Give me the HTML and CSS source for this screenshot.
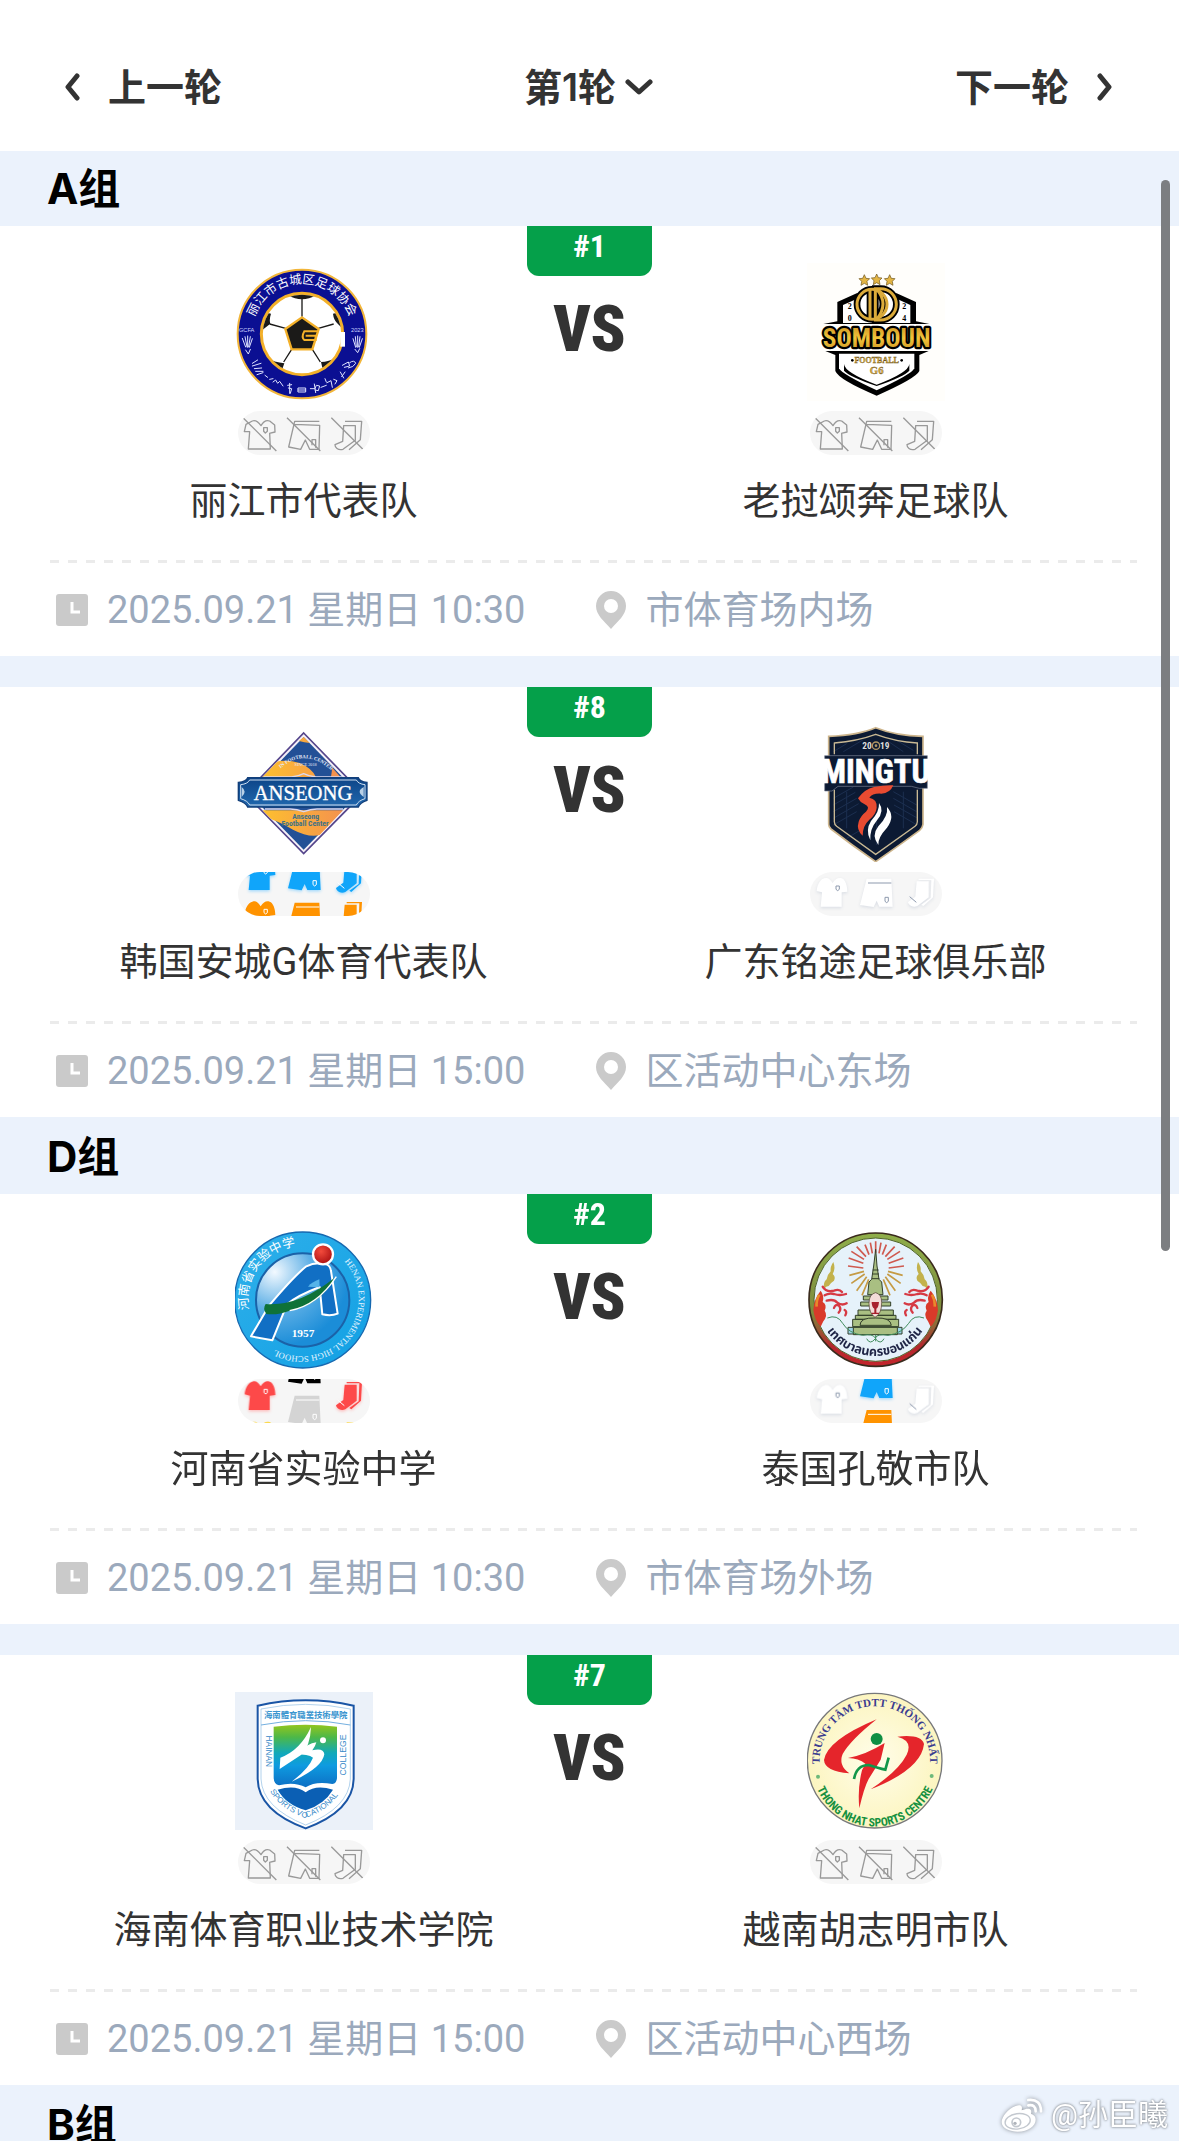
FILE: index.html
```html
<!DOCTYPE html>
<html lang="zh-CN">
<head>
  <meta charset="UTF-8" />
  <meta name="viewport" content="width=device-width, initial-scale=1.0"/>
  <title>赛程 | 第1轮</title>
  <link rel="stylesheet" href="styles.css">
</head>
<body>
  <!-- Shared icons -->
  <svg class="sprite" aria-hidden="true">
    <symbol id="chevron" viewBox="0 0 16 28">
      <path d="M13 3 4 14l9 11" fill="none" stroke="currentColor" stroke-width="5" stroke-linecap="round" stroke-linejoin="round"/>
    </symbol>
    <symbol id="clock" viewBox="0 0 32 32">
      <rect width="32" height="32" rx="3" fill="#cacaca"/>
      <path d="M16 8v10h8" fill="none" stroke="#fff" stroke-width="3"/>
    </symbol>
    <symbol id="pin" viewBox="0 0 32 38">
      <path d="M16 0a15 15 0 0 1 15 15c0 9-8 15-15 23C9 30 1 24 1 15A15 15 0 0 1 16 0z" fill="#cacaca"/>
      <circle cx="16" cy="15" r="7" fill="#fff"/>
    </symbol>

    <!-- No kit chosen -->
    <symbol id="no-kit" viewBox="0 0 396 132">
      <g fill="none" stroke="#999" stroke-width="4" stroke-linejoin="round">
        <path d="M43 30 24 40l-5 22h16l-4 52h66l-2-48M43 30c8-3 16 0 26 14 8-14 18-17 26-14l15 12 1 21-17 4M77 50h11v11l-6 5-5-5z"/>
        <path d="M15 20l100 100"/>
        <path d="M244 31h-74l-18 77 36 7 14-28 13 28h28l2-72-76-3M222 103V86h11v24"/>
        <path d="M147 20l100 100"/>
        <path d="M317 44h35v44l-37 27c-16 4-24-6-24-14l23-10zM321 31h50l-4 55-34 30"/>
        <path d="M280 20l94 94"/>
      </g>
    </symbol>

    <symbol id="shirt" viewBox="0 0 132 132">
      <path d="M43 19c10-3 16 0 25 14 9-14 17-17 27-14 10 3 17 20 17 40l-17 2v43H32l4-43-16-4c2-22 12-35 23-38z" fill="currentColor"/>
      <path d="M78 42h10v10l-5 4-5-4z" fill="none" stroke="var(--mark)" stroke-width="3"/>
    </symbol>
    <symbol id="shorts" viewBox="0 0 132 132">
      <path d="M38 20h74l4 84H76L68 86l-9 19-41-6z" fill="currentColor"/>
      <path d="M42 33h70M93 76h10v12l-5 4-5-4z" fill="none" stroke="var(--mark)" stroke-width="3"/>
    </symbol>
    <symbol id="socks" viewBox="0 0 132 132">
      <path d="M56 28h36v48l-34 26c-14 6-26-2-28-12l22-16z" fill="currentColor"/>
      <path d="M62 20h46l-3 56-29 26-6-4 28-20 2-54H62z" fill="currentColor"/>
      <path d="M35 74l20 17" fill="none" stroke="var(--mark)" stroke-width="3"/>
    </symbol>
  </svg>

  <header class="toolbar">
    <button class="round-btn" type="button">
      <svg class="chevron"><use href="#chevron"/></svg>
      上一轮
    </button>
    <label class="round-pick">
      <select aria-label="选择轮次">
        <option>第1轮</option>
      </select>
      <svg class="chevron-down" viewBox="0 0 28 16"><path d="M3 3l11 10L25 3" fill="none" stroke="currentColor" stroke-width="5" stroke-linecap="round" stroke-linejoin="round"/></svg>
    </label>
    <button class="round-btn" type="button">
      下一轮
      <svg class="chevron flip"><use href="#chevron"/></svg>
    </button>
  </header>

  <main class="schedule">
    <h2 class="group-title">A组</h2>

    <article class="match">
      <div class="versus">
        <div class="team">
          <svg class="crest" viewBox="46 39 414 414" role="img" aria-label="丽江市古城区足球协会">
            <defs>
              <path id="ljTop" d="M96 252a151 151 0 0 1 302 0"/>
              <clipPath id="ljBall"><circle cx="247" cy="252" r="118"/></clipPath>
            </defs>
            <circle cx="247" cy="252" r="193" fill="#0b0f92" stroke="#f2b63a" stroke-width="6"/>
            <circle cx="247" cy="252" r="122" fill="#fff" stroke="#f3b029" stroke-width="9"/>
            <g clip-path="url(#ljBall)">
              <path d="M205 136q42 24 84 0l-10-10h-64zM128 185l26 6q-6 18-2 30l-25 20zM366 185l-26 6q2 18 12 28l15 15zM140 322q24 16 54 18l-10 28-20-6zM354 322q-28 14-50 14l8 34 28-14z" fill="#1b1a18"/>
              <path d="M247 200v-55M198 235l-48-13M296 235l46-13M216 298l-24 38M278 298l24 38" stroke="#1b1a18" stroke-width="4"/>
            </g>
            <path d="M247 202l50 35-19 61h-62l-19-61z" fill="#1b1a18" stroke="#f3b029" stroke-width="7"/>
            <path d="M296 244h-42q-10 18 0 26h34v-13h-30" fill="none" stroke="#f3b029" stroke-width="6"/>
            <path d="M362 246h14v44h-14z" fill="#fff"/>
            <text class="cjk" font-size="37" fill="#fff" text-anchor="middle"><textPath href="#ljTop" startOffset="50%">丽江市古城区足球协会</textPath></text>
            <g font-family="Liberation Sans" font-size="17" fill="#cdd4ff" text-anchor="middle">
              <text x="81" y="247">GCFA</text>
              <text x="413" y="247">2023</text>
            </g>
            <g fill="none" stroke="#dfe3ff" stroke-width="3" stroke-linecap="round">
              <path d="M68 265l10 26M76 260l6 30M84 258v34M92 260l-5 30M98 266l-9 26M78 300l8 12 6-14M400 266l8 26M407 260l3 30M414 258v34M421 260l-4 30M428 266l-9 26M406 298l8 10 6-12"/>
              <path d="M98 340l16-10M98 348l26-8M104 356l22-2M108 364l22 0M112 374l18-6M136 376l8 6M150 388l10-2M160 396l8-6 6 10 6-6 10 14M204 406l12-2M206 414l10 2-4 14M210 400v30M236 414h22v12h-22zM236 420h22M272 416h14l4-10 10 2-4 14-10-2M284 402l4 26M304 412l16-6M316 386l4 10M322 398l12-6 4 20M342 388l10 4-6 10M362 366l10 18M366 380l10-14M368 346l18-10 4 12-16 4M390 338q14-10 18 2-6 12-22 14"/>
            </g>
          </svg>
          <svg class="kit" viewBox="0 0 396 132" role="img" aria-label="球衣未定"><use href="#no-kit"/></svg>
          <p class="name">丽江市代表队</p>
        </div>
        <div class="middle">
          <span class="no">#1</span>
          <strong class="vs">VS</strong>
        </div>
        <div class="team">
          <svg class="crest" viewBox="51 39 414 414" role="img" aria-label="SOMBOUN FOOTBALL G6">
            <defs>
              <linearGradient id="gold" x1="0" y1="0" x2="0" y2="1">
                <stop offset="0" stop-color="#c98f1f"/>
                <stop offset=".5" stop-color="#f2c53c"/>
                <stop offset="1" stop-color="#c98f1f"/>
              </linearGradient>
              <path id="star" d="M0-16l5 11 11 1-8 8 2 12-10-6-10 6 2-12-8-8 11-1z"/>
              <g id="sbRings">
                <circle cx="246" cy="163" r="45"/>
                <path d="M240 118v90M256 116h16a47 47 0 0 1 0 94h-16zM262 120q34 40 0 86"/>
              </g>
            </defs>
            <rect x="51" y="39" width="414" height="414" fill="#fffefb"/>
            <g fill="#e3b544" stroke="#6b5118" stroke-width="2">
              <use href="#star" x="223" y="90"/><use href="#star" x="260" y="88"/><use href="#star" x="299" y="90"/>
            </g>
            <path d="M142 156l58-26h120l58 26v58l40 8H100l42-8z"/>
            <path d="M159 165l46-20h112l44 20v54H159z" fill="#fff"/>
            <path d="M106 303h310l-28 12v48q-10 22-128 74-114-48-124-74v-48z"/>
            <path d="M147 311h226v44q-8 18-113 66-104-48-113-66z" fill="#fff"/>
            <path d="M162 342q2 26 98 62 96-36 98-62v20q-16 18-98 46-82-28-98-46z"/>
            <use href="#sbRings" fill="#fff" stroke="#000" stroke-width="20"/>
            <use href="#sbRings" fill="none" stroke="#dcab3a" stroke-width="9"/>
            <g font-family="Liberation Serif" font-size="24" font-weight="bold" text-anchor="middle">
              <text x="179" y="177">2</text><text x="179" y="214">0</text>
              <text x="343" y="177">2</text><text x="343" y="214">4</text>
            </g>
            <text x="260" y="290" class="condensed" font-size="76" text-anchor="middle" fill="url(#gold)" stroke="#000" stroke-width="13" stroke-linejoin="round" paint-order="stroke">SOMBOUN</text>
            <g font-family="Liberation Serif" font-weight="bold" text-anchor="middle" fill="#dcae3d" stroke="#6b5118">
              <text x="260" y="339" font-size="24">FOOTBALL</text>
              <text x="260" y="371" font-size="32">G6</text>
            </g>
            <circle cx="187" cy="331" r="4"/><circle cx="335" cy="331" r="4"/>
          </svg>
          <svg class="kit" viewBox="0 0 396 132" role="img" aria-label="球衣未定"><use href="#no-kit"/></svg>
          <p class="name">老挝颂奔足球队</p>
        </div>
      </div>
      <div class="info">
        <svg class="clock"><use href="#clock"/></svg>
        <time datetime="2025-09-21T10:30">2025.09.21 星期日 10:30</time>
        <svg class="pin"><use href="#pin"/></svg>
        <span>市体育场内场</span>
      </div>
    </article>

    <article class="match">
      <div class="versus">
        <div class="team">
          <svg class="crest" viewBox="46 27 414 414" role="img" aria-label="ANSEONG">
            <defs>
              <linearGradient id="asBar" x1="0" y1="0" x2="0" y2="1">
                <stop offset="0" stop-color="#0d4487"/><stop offset="1" stop-color="#2168ae"/>
              </linearGradient>
              <linearGradient id="asSun" x1="0" x2="1">
                <stop offset="0" stop-color="#fdc02f"/><stop offset="1" stop-color="#f4924e"/>
              </linearGradient>
              <clipPath id="asDiamond"><path d="M252 58l172 178-172 176L80 236z"/></clipPath>
              <path id="asArc" d="M168 174q86-92 182 6"/>
            </defs>
            <path d="M252 54l177 182-177 180L76 236z" fill="#f5f0f8" stroke="#54458b" stroke-width="5"/>
            <path d="M252 66l165 170-165 168L88 236z" fill="#235096"/>
            <g clip-path="url(#asDiamond)">
              <path d="M238 78q16 4 32 6l-18-18zM124 190l34-46q36-14 82 0 38 16 50 44zM130 286h240l-70 74q-34 8-80-16-50-30-90-38z" fill="url(#asSun)"/>
              <path d="M338 158l24 28h-28z" fill="#f4924e"/>
            </g>
            <path d="M132 186h84q20-2 36-10 16 8 36 10h84" fill="none" stroke="#dcd8ee" stroke-width="4"/>
            <text font-family="Liberation Serif" font-size="15" font-weight="bold" fill="#e4e9f7" text-anchor="middle"><textPath href="#asArc" startOffset="50%">IN FOOTBALL CENTER</textPath></text>
            <text x="258" y="152" font-family="Liberation Serif" font-size="13" fill="#e4e9f7" text-anchor="middle">SINCE 2018</text>
            <path d="M84 188h332q4 12 26 14v54q-22 8-26 20H84q-4-12-28-20v-54q24-2 28-14z" fill="url(#asBar)" stroke="#123f7a" stroke-width="4"/>
            <path d="M90 195h320q6 12 26 14v42q-20 6-26 19H90q-6-13-27-19v-42q21-2 27-14z" fill="none" stroke="#d2e0f0" stroke-width="3"/>
            <path d="M66 216q18 14 0 30zM432 216q-24 14 0 30z" fill="#b9d0e6"/>
            <text x="250" y="254" font-family="Liberation Serif" font-size="62" fill="#fff" stroke="#fff" text-anchor="middle">ANSEONG</text>
            <path d="M136 282h76q20 0 40 8 20-8 40-8h78" fill="none" stroke="#dcd8ee" stroke-width="4"/>
            <g class="condensed" font-size="23" fill="#3d7187" text-anchor="middle">
              <text x="258" y="311">Anseong</text>
              <text x="256" y="334">Football Center</text>
            </g>
          </svg>
          <svg class="kit" viewBox="0 0 396 132" role="img" aria-label="蓝色或橙色球衣">
            <g class="blue">
              <use href="#shirt" x="0" y="-50" width="132" height="132"/>
              <use href="#shorts" x="132" y="-50" width="132" height="132"/>
              <use href="#socks" x="264" y="-42" width="132" height="132"/>
            </g>
            <g class="orange">
              <use href="#shirt" x="0" y="70" width="132" height="132"/>
              <use href="#shorts" x="132" y="72" width="132" height="132"/>
              <use href="#socks" x="264" y="70" width="132" height="132"/>
            </g>
          </svg>
          <p class="name">韩国安城G体育代表队</p>
        </div>
        <div class="middle">
          <span class="no">#8</span>
          <strong class="vs">VS</strong>
        </div>
        <div class="team">
          <svg class="crest" viewBox="51 27 414 414" role="img" aria-label="MINGTU">
            <path d="M116 64q90-4 141-26 60 24 142 26v264q-2 12-10 18-60 44-132 94-72-50-134-98-7-6-7-14z" fill="#0c1a33" stroke="#cdb58c" stroke-width="5"/>
            <g fill="none" stroke="#1c2f50" stroke-width="3">
              <path d="M130 110l40-24M160 110l60-36M290 76l50 34M320 76l50 30M130 250l60-34M130 270l66-38M130 290l70-40M130 310l76-44M130 330l70-40M310 230l70 40M310 250l70 40M312 270l68 38M312 290l66 38M260 300v90M220 340l-50 30M170 230v110M340 230v110"/>
            </g>
            <path d="M133 118V84q70-6 124-26 60 22 125 26v34M133 224v96q0 8 7 14l117 84 118-84q7-6 7-14v-96" fill="none" stroke="#c9b994" stroke-width="4"/>
            <path d="M104 122h308v98h-24l-24-6H144l-18 14h-22z" fill="#0c1a33" stroke="#7c8496" stroke-width="2"/>
            <g class="condensed" font-size="28" fill="#ddd" text-anchor="middle">
              <text x="231" y="102">20</text><text x="284" y="102">19</text>
            </g>
            <circle cx="258" cy="92" r="11" fill="none" stroke="#b09564" stroke-width="4"/><circle cx="258" cy="92" r="4" fill="#b09564"/>
            <text x="257" y="205" class="condensed" font-size="98" fill="#fff" stroke="#fff" stroke-width="2" text-anchor="middle">MINGTU</text>
            <path d="M310 211q-10 24-36 25-26-2-36 12 24 4 22 30-2 20-22 36-20 18-20 48-20-18-12-42 6-18 22-30 14-14-4-22-14-6-20-18 20-28 48-34 30-6 58-5z" fill="#e94b31"/>
            <path d="M267 264q18 24-6 52-22 26-20 60-16-30 2-58 26-28 24-54zM291 276q26 28 0 62-28 30-26 52-22-28 0-56 30-30 26-58z" fill="#fff"/>
          </svg>
          <svg class="kit" viewBox="0 0 396 132" role="img" aria-label="白色球衣">
            <g class="white">
              <use href="#shirt" width="132" height="132"/>
              <use href="#shorts" x="132" width="132" height="132"/>
              <use href="#socks" x="264" width="132" height="132"/>
            </g>
          </svg>
          <p class="name">广东铭途足球俱乐部</p>
        </div>
      </div>
      <div class="info">
        <svg class="clock"><use href="#clock"/></svg>
        <time datetime="2025-09-21T15:00">2025.09.21 星期日 15:00</time>
        <svg class="pin"><use href="#pin"/></svg>
        <span>区活动中心东场</span>
      </div>
    </article>

    <h2 class="group-title">D组</h2>

    <article class="match">
      <div class="versus">
        <div class="team">
          <svg class="crest" viewBox="46 39 414 414" role="img" aria-label="河南省实验中学">
            <defs>
              <radialGradient id="hnInner" cx=".2" cy=".2" r=".8">
                <stop offset="0" stop-color="#f2f9ff"/><stop offset=".5" stop-color="#5fb0e6"/><stop offset="1" stop-color="#1b8dd8"/>
              </radialGradient>
              <linearGradient id="hnRing" x1="0" y1="0" x2="1" y2="1">
                <stop offset="0" stop-color="#2fb0ea"/><stop offset="1" stop-color="#12a0e4"/>
              </linearGradient>
              <radialGradient id="hnRed" cx=".4" cy=".35" r=".7">
                <stop offset="0" stop-color="#f34b3c"/><stop offset="1" stop-color="#a80d10"/>
              </radialGradient>
              <path id="hnLeft" d="M97 306A160 160 0 0 1 288 90"/>
              <path id="hnRight" d="M352 109A171 171 0 1 1 140 378"/>
            </defs>
            <circle cx="249" cy="246" r="204" fill="url(#hnRing)" stroke="#1568b0" stroke-width="4"/>
            <circle cx="249" cy="246" r="140" fill="url(#hnInner)" stroke="#1b62a8" stroke-width="6"/>
            <text class="cjk" font-size="38" fill="#fff" text-anchor="middle"><textPath href="#hnLeft" startOffset="46%">河南省实验中学</textPath></text>
            <text font-family="Liberation Serif" font-size="26" fill="#eaf6ff" text-anchor="middle"><textPath href="#hnRight" startOffset="50%">HENAN EXPERIMENTAL HIGH SCHOOL</textPath></text>
            <g stroke="#fff" stroke-width="6" stroke-linejoin="round">
              <path d="M94 355l54-92q76-90 112-118 28-14 60-6 12 4 14 20l20 128q-20 8-46 2l-8-82q-68 26-98 52l-44 108z" fill="#116fc4"/>
            </g>
            <path d="M300 208l-1-24q-22 8-34 22z" fill="#55b3e8"/>
            <path d="M138 258q98 8 206-78-40 80-134 98-36 14-70 10-12-16-2-30z" fill="#0f7238"/>
            <path d="M210 278q82-14 140-102" fill="none" stroke="#fff" stroke-width="4"/>
            <circle cx="310" cy="109" r="30" fill="url(#hnRed)" stroke="#fff" stroke-width="7"/>
            <text x="250" y="358" font-family="Liberation Serif" font-weight="bold" font-size="34" fill="#fff" text-anchor="middle">1957</text>
          </svg>
          <svg class="kit" viewBox="0 0 396 132" role="img" aria-label="红色或黄色球衣">
            <g class="red">
              <use href="#shirt" y="-11" width="132" height="132"/>
              <use href="#socks" x="264" y="-11" width="132" height="132"/>
            </g>
            <use class="black" href="#shorts" x="132" y="-91" width="132" height="132"/>
            <use class="grey" href="#shorts" x="132" y="30" width="132" height="132"/>
            <g class="yellow">
              <use href="#shirt" y="110" width="132" height="132"/>
              <use href="#socks" x="264" y="110" width="132" height="132"/>
            </g>
          </svg>
          <p class="name">河南省实验中学</p>
        </div>
        <div class="middle">
          <span class="no">#2</span>
          <strong class="vs">VS</strong>
        </div>
        <div class="team">
          <svg class="crest" viewBox="51 39 414 414" role="img" aria-label="เทศบาลนครขอนแก่น">
            <defs>
              <linearGradient id="kkRing" x1="0" y1="0" x2="0" y2="1">
                <stop offset="0" stop-color="#8fae4a"/><stop offset=".6" stop-color="#7d8b3c"/><stop offset=".85" stop-color="#b3282d"/><stop offset="1" stop-color="#c4252c"/>
              </linearGradient>
              <path id="kkArc" d="M95 312A176 176 0 0 0 414 312"/>
              <g id="flame">
                <path d="M130 132q8 20-2 36 10 8 4 20-10 6-16 16-8 0-14 10-4-20 8-30 2-14 12-24-2-14 8-28z" fill="#c3b24c"/>
                <g fill="none" stroke="#d63a44" stroke-width="7" stroke-linecap="round">
                  <path d="M98 206q10 18 34 12 16-6 24 4M104 232q12-8 28-4 18 6 36 0M110 248q22-6 32 6 14 10 28 2M132 270q4-12 14-8 10 12 0 22M164 276q8 4 2 16"/>
                </g>
                <path d="M92 218q12 16 6 34 14 8 6 26 10 14-4 32l-8 16q-18-18-22-50 2-34 22-58z" fill="#d93a2a"/>
                <path d="M88 230q-10 18-8 36" fill="none" stroke="#e98a2c" stroke-width="8"/>
              </g>
            </defs>
            <circle cx="257" cy="245" r="200" fill="url(#kkRing)" stroke="#3a2a1c" stroke-width="5"/>
            <circle cx="257" cy="245" r="185" fill="#e6f2fa" stroke="#50652a" stroke-width="3"/>
            <g stroke="#cf5a50" stroke-width="5">
              <path d="M237 110l-12-30M247 106l-6-32M257 104V70M267 106l6-32M277 110l12-30M228 116l-28-30M286 116l28-30M222 124l-38-24M292 124l38-24M220 136l-44-16M296 136l44-16M220 150l-46-6M296 150l46-6"/>
            </g>
            <g stroke="#c59b45" stroke-width="5">
              <path d="M222 160l-44 12M294 160l44 12M224 168l-40 28M292 168l40 28M230 176l-30 42M286 176l30 42M236 184l-20 48M280 184l20 48"/>
            </g>
            <use href="#flame"/>
            <use href="#flame" transform="matrix(-1 0 0 1 514 0)"/>
            <g fill="#a9bf82" stroke="#33402a" stroke-width="3">
              <path d="M257 94l4 50 6 40 8 8 4 38h-46l4-38 8-8 6-40zM220 234h74v12h-74zM212 252h90v12h-90zM204 276h106v16H204zM196 292h122v12H196zM188 304h138v22H188z"/>
              <path d="M210 322q0-24 46-22 46-2 48 22z"/>
              <path d="M174 328h162v20H174z" fill="#9cd3e6"/>
              <path d="M190 328h132v22H190z"/>
            </g>
            <path d="M248 156h18M247 168h20M246 182h22" stroke="#33402a" stroke-width="3"/>
            <path d="M257 224q18 4 18 30 0 34-20 44-18-12-18-42 0-28 20-32z" fill="#f3dcd8" stroke="#4b3c2e" stroke-width="2"/>
            <path d="M245 252h22q-2 18-8 20v12h8v4h-22v-4h8v-12q-8-4-8-20z" fill="#a8202c"/>
            <path d="M112 300q30-12 46 16 18 30 60 36 30-6 38 8 6-14 38-8 42-6 62-36 16-28 46-16M230 362q10 20 26 0 16 20 26 0M257 350v20" fill="none" stroke="#3f8c5c" stroke-width="3"/>
            <text font-family="Noto Sans Thai, Noto Sans" font-weight="bold" font-size="38" fill="#1f2546" text-anchor="middle"><textPath href="#kkArc" startOffset="50%">เทศบาลนครขอนแก่น</textPath></text>
          </svg>
          <svg class="kit" viewBox="0 0 396 132" role="img" aria-label="白色球衣，蓝色或橙色短裤">
            <g class="white">
              <use href="#shirt" width="132" height="132"/>
              <use href="#socks" x="264" width="132" height="132"/>
            </g>
            <use class="blue" href="#shorts" x="132" y="-47" width="132" height="132"/>
            <use class="orange" href="#shorts" x="132" y="73" width="132" height="132"/>
          </svg>
          <p class="name">泰国孔敬市队</p>
        </div>
      </div>
      <div class="info">
        <svg class="clock"><use href="#clock"/></svg>
        <time datetime="2025-09-21T10:30">2025.09.21 星期日 10:30</time>
        <svg class="pin"><use href="#pin"/></svg>
        <span>市体育场外场</span>
      </div>
    </article>

    <article class="match">
      <div class="versus">
        <div class="team">
          <svg class="crest" viewBox="46 41 414 414" role="img" aria-label="海南体育职业技术学院">
            <defs>
              <linearGradient id="hiFill" x1="0" y1="0" x2="0" y2="1">
                <stop offset="0" stop-color="#93c51d"/><stop offset=".2" stop-color="#4db848"/><stop offset=".45" stop-color="#11a9b8"/><stop offset=".65" stop-color="#0e9be0"/><stop offset="1" stop-color="#0d6fc4"/>
              </linearGradient>
              <path id="hiArc" d="M136 300Q156 382 256 419 350 388 376 306"/>
            </defs>
            <rect x="46" y="41" width="414" height="414" fill="#ebf1f9"/>
            <path d="M114 82q144-32 288 0v220q-2 96-144 148-142-52-144-148z" fill="#fff" stroke="#1a55a5" stroke-width="6"/>
            <path d="M124 92q134-28 268 0v210q-4 86-134 138-130-52-134-138z" fill="none" stroke="#8dbce4" stroke-width="2"/>
            <path d="M124 140q134-26 268 0" fill="none" stroke="#74b0e0" stroke-width="3"/>
            <text x="258" y="120" class="cjk" font-size="25" font-weight="bold" fill="#3a95cf" text-anchor="middle">海南體育職業技術學院</text>
            <path d="M162 145q96-12 190 0v152q0 18-14 20-50-10-80 10-34-18-80-6-16-4-16-24z" fill="url(#hiFill)"/>
            <path d="M174 334q54-16 84 8 30-24 82-8-26 44-82 62-60-18-84-62z" fill="#0b5fb4"/>
            <path d="M274 146q-2 58-30 84l-64 42 2-34q60-22 92-92z" fill="#fff"/>
            <path d="M226 228q40-34 64-36-2 10-12 24 34-8 36 12-6 40-98 82 52-40 64-72-14-10-54-10z" fill="#fff"/>
            <circle cx="310" cy="186" r="9" fill="#fff"/>
            <g font-family="Liberation Sans" fill="#3689c8" text-anchor="middle">
              <text transform="translate(138 219) rotate(90)" font-size="25">HAINAN</text>
              <text transform="translate(378 230) rotate(-90)" font-size="26">COLLEGE</text>
              <text font-size="24"><textPath href="#hiArc" startOffset="49%">SPORTS VOCATIONAL</textPath></text>
            </g>
          </svg>
          <svg class="kit" viewBox="0 0 396 132" role="img" aria-label="球衣未定"><use href="#no-kit"/></svg>
          <p class="name">海南体育职业技术学院</p>
        </div>
        <div class="middle">
          <span class="no">#7</span>
          <strong class="vs">VS</strong>
        </div>
        <div class="team">
          <svg class="crest" viewBox="51 41 414 414" role="img" aria-label="TRUNG TÂM TDTT THỐNG NHẤT">
            <defs>
              <radialGradient id="tnFill">
                <stop offset="0" stop-color="#fffdea"/><stop offset="1" stop-color="#fcf5c0"/>
              </radialGradient>
              <path id="tnTop" d="M90 272A166 166 0 1 1 419 272"/>
              <path id="tnBottom" d="M77 322A190 190 0 0 0 432 322"/>
            </defs>
            <circle cx="254" cy="247" r="202" fill="url(#tnFill)" stroke="#77787a" stroke-width="4"/>
            <text font-family="Liberation Serif" font-weight="bold" font-size="33" fill="#3b3c8f" text-anchor="middle"><textPath href="#tnTop" startOffset="50%">TRUNG TÂM TDTT THỐNG NHẤT</textPath></text>
            <text class="condensed" font-size="35" fill="#15903f" text-anchor="middle"><textPath href="#tnBottom" startOffset="50%">THONG NHAT SPORTS CENTRE</textPath></text>
            <g fill="#6db97a"><circle cx="84" cy="295" r="6"/><circle cx="425" cy="293" r="6"/></g>
            <path d="M260 123q-78 62-102 104-14 34 20 58-74-6-76-40 10-60 158-122z" fill="#e5252b"/>
            <path d="M322 175q72-8 80 22-8 76-160 136 84-56 108-104 20-42-28-54z" fill="#e5252b"/>
            <path d="M284 194l-12 50q-20 32-36 58-14 26-28 88-6-60 8-114l10-20q-20-16-52-17 54-10 110-45z" fill="#e5252b"/>
            <circle cx="260" cy="182" r="18" fill="#0f8f43"/>
            <path d="M192 302q8-42 44-42 30 10 50 14l10-36" fill="none" stroke="#12964a" stroke-width="8"/>
          </svg>
          <svg class="kit" viewBox="0 0 396 132" role="img" aria-label="球衣未定"><use href="#no-kit"/></svg>
          <p class="name">越南胡志明市队</p>
        </div>
      </div>
      <div class="info">
        <svg class="clock"><use href="#clock"/></svg>
        <time datetime="2025-09-21T15:00">2025.09.21 星期日 15:00</time>
        <svg class="pin"><use href="#pin"/></svg>
        <span>区活动中心西场</span>
      </div>
    </article>

    <h2 class="group-title">B组</h2>
  </main>

  <div class="scrollbar"></div>

  <div class="watermark">
    <svg viewBox="0 0 126 102" aria-hidden="true">
      <path d="M44 24c-24 8-42 34-42 48 0 20 26 29 48 29 32 0 54-18 54-36 0-12-8-15-14-18 4-14-6-20-28-10 4-14-4-18-18-13z" fill="#fff"/>
      <ellipse cx="50" cy="70" rx="38" ry="23" fill="none" stroke="#c3c8cf" stroke-width="4" transform="rotate(-8 50 70)"/>
      <circle cx="46" cy="73" r="13" fill="none" stroke="#c3c8cf" stroke-width="5"/>
      <circle cx="42" cy="76" r="5" fill="#aeb3ba"/>
      <path d="M82 6q38-4 38 34M82 22q22-4 22 18" fill="none" stroke="#fff" stroke-width="8" stroke-linecap="round"/>
    </svg>
    <span>@孙臣曦</span>
  </div>
</body>
</html>
```
FILE: styles.css
```css
* {
  box-sizing: border-box;
}

body {
  margin: 0;
  height: 100vh;
  overflow: hidden;
  background-color: #fff;
  color: #333;
  font-family: Roboto, "Noto Sans CJK SC", sans-serif;
  font-size: 38px;
  line-height: 56px;
}

.sprite {
  position: absolute;
  width: 0;
  height: 0;
}

.cjk {
  font-family: "Noto Sans CJK SC", sans-serif;
}

.condensed {
  font-family: "Roboto Condensed", "Open Sans Condensed", sans-serif;
  font-weight: bold;
}

/* Round switcher */
.toolbar {
  display: grid;
  grid-template-columns: 1fr auto 1fr;
  align-items: center;
  padding: 59px 66px 36px 64px;
  font-family: Inter, "Noto Sans CJK SC", sans-serif;
}

.round-btn,
.round-pick select {
  margin: 0;
  padding: 0;
  border: none;
  background: transparent;
  color: inherit;
  font: inherit;
  font-weight: 600;
  cursor: pointer;
}

.round-btn {
  display: flex;
  align-items: center;
  gap: 28px;
}

.round-btn:last-child {
  justify-self: end;
}

.round-pick {
  display: flex;
  align-items: center;
  gap: 8px;
}

.round-pick select {
  appearance: none;
}

.chevron {
  width: 16px;
  height: 28px;
}

.chevron.flip {
  transform: scaleX(-1);
}

.chevron-down {
  width: 28px;
  height: 16px;
}

/* Groups and matches */
.group-title {
  margin: 0;
  padding: 12px 47px 9px;
  background-color: #ebf2fc;
  color: #000;
  font-family: Inter, "Noto Sans CJK SC", sans-serif;
  font-size: 42px;
  font-weight: bold;
}

.group-title:first-child {
  padding-top: 10px;
}

.match + .match {
  border-top: 31px solid #ebf2fc;
}

.versus {
  display: grid;
  grid-template-columns: 1fr 125px 1fr;
  padding: 0 80px;
}

.team {
  display: flex;
  flex-direction: column;
  align-items: center;
  padding-top: 37px;
}

.crest {
  width: 138px;
  height: 138px;
}

.kit {
  width: 132px;
  height: 44px;
  margin-top: 10px;
  border-radius: 22px;
  background-color: #f6f6f6;
}

.name {
  margin: 18px 0 31px;
  white-space: nowrap;
}

.middle {
  display: flex;
  flex-direction: column;
  align-items: center;
  gap: 18px;
  font-family: "Roboto Condensed", "Open Sans Condensed", sans-serif;
  font-weight: bold;
}

.no {
  width: 100%;
  height: 50px;
  border-radius: 0 0 12px 12px;
  background-color: #05a04a;
  color: #fff;
  font-size: 32px;
  line-height: 40px;
  text-align: center;
}

.vs {
  font-size: 64px;
  line-height: 72px;
}

.info {
  display: flex;
  align-items: center;
  margin: 0 42px 0 50px;
  padding: 22px 6px 18px;
  color: #9ba9bc;
  background: repeating-linear-gradient(90deg, #ebebeb 0 9px, transparent 9px 18px) top / 100% 3px no-repeat;
}

.clock {
  width: 32px;
  height: 32px;
  margin-right: 19px;
}

.pin {
  width: 32px;
  height: 38px;
  margin: 0 18px 0 70px;
}

/* Kit colours */
.blue, .orange, .red, .black, .grey, .yellow {
  --mark: #fff;
}

.blue {
  color: #10a5fa;
  filter: drop-shadow(0 4px 4px #9ed8fc);
}

.orange {
  color: #ff9300;
}

.red {
  color: #fd4949;
  filter: drop-shadow(0 4px 4px #fdb9b9);
}

.black {
  color: #000;
}

.grey {
  color: #d4d4d4;
}

.yellow {
  color: #fbd94e;
}

.white {
  --mark: #8d99ad;
  color: #fff;
  filter: drop-shadow(0 4px 4px #d9dde4);
}

/* Overlays */
.scrollbar {
  position: fixed;
  top: 180px;
  right: 9px;
  width: 9px;
  height: 50vh;
  border-radius: 5px;
  background-color: #7c7e81;
}

.watermark {
  position: fixed;
  right: 11px;
  bottom: 4px;
  display: flex;
  align-items: center;
  gap: 8px;
  color: #fff;
  font-size: 30px;
  line-height: 44px;
  text-shadow: 0 0 3px #8b9097, 0 0 2px #8b9097;
}

.watermark svg {
  width: 42px;
  height: 34px;
  filter: drop-shadow(0 0 2px #8b9097);
}
```
